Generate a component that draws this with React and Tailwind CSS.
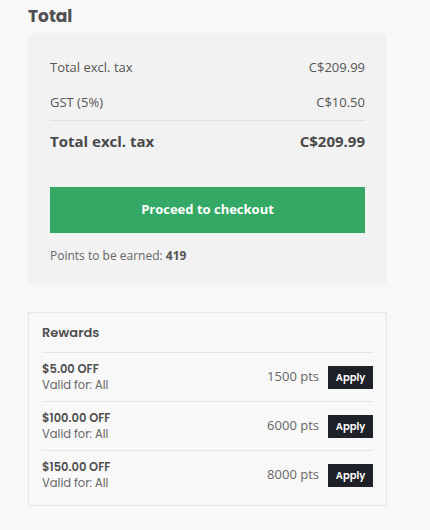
import React from "react";

const rewards = [
  { title: "$5.00 OFF", pts: "1500 pts" },
  { title: "$100.00 OFF", pts: "6000 pts" },
  { title: "$150.00 OFF", pts: "8000 pts" },
];

const heading = { fontFamily: "Poppins, Lato, 'Open Sans', sans-serif" };
const body = { fontFamily: "'Open Sans', 'Liberation Sans', sans-serif" };

export default function App() {
  return (
    <div
      className="min-h-[530px] w-[430px] bg-[#f8f8f8] pl-[28px] pr-[43px] pt-[5px] pb-6 text-[#555]"
      style={body}
    >
      <h2 className="text-[17px] font-bold leading-[22px] text-[#505050]" style={heading}>
        Total
      </h2>

      {/* Totals */}
      <div className="mt-[6px] rounded-[6px] bg-[#f2f2f2] px-[22px] pt-[22px] pb-[19px]">
        <div className="flex items-center justify-between text-[13px] leading-[24px] text-[#555]">
          <span>Total excl. tax</span>
          <span>C$209.99</span>
        </div>
        <div className="mt-[11px] flex items-center justify-between text-[13px] leading-[24px] text-[#555]">
          <span>GST (5%)</span>
          <span>C$10.50</span>
        </div>
        <div className="mt-[6px] border-t border-[#e1e1e1] pt-[8px]">
          <div className="flex items-center justify-between text-[15px] font-bold leading-[24px] text-[#4a4a4a]">
            <span>Total excl. tax</span>
            <span>C$209.99</span>
          </div>
        </div>
        <button
          className="mt-[34px] flex h-[46px] w-full items-center justify-center bg-[#34a865] text-[13px] font-bold text-white"
          style={body}
        >
          Proceed to checkout
        </button>
        <p className="mt-[13px] text-[12px] leading-[20px] text-[#666]" style={body}>
          Points to be earned: <span className="font-bold text-[#555]">419</span>
        </p>
      </div>

      {/* Rewards */}
      <div className="mt-[27px] border border-[#e6e6e6] bg-[#f8f8f8] px-[13px] pt-[10px] pb-[6px]">
        <h3 className="pb-[9px] text-[13px] font-semibold leading-[20px] text-[#505050]" style={heading}>
          Rewards
        </h3>
        {rewards.map((r) => (
          <div
            key={r.title}
            className="flex h-[49px] items-center justify-between border-t border-[#e4e4e4]"
          >
            <div className="text-[11.5px] leading-[16px]" style={heading}>
              <div className="font-semibold text-[#505050]">{r.title}</div>
              <div className="text-[#666]">Valid for: All</div>
            </div>
            <div className="flex items-center gap-[9px]">
              <span className="text-[13px] text-[#666]" style={body}>{r.pts}</span>
              <button
                className="flex h-[23px] w-[45px] items-center justify-center bg-[#1f2129] text-[10px] font-semibold text-white"
                style={heading}
              >
                Apply
              </button>
            </div>
          </div>
        ))}
      </div>
    </div>
  );
}
